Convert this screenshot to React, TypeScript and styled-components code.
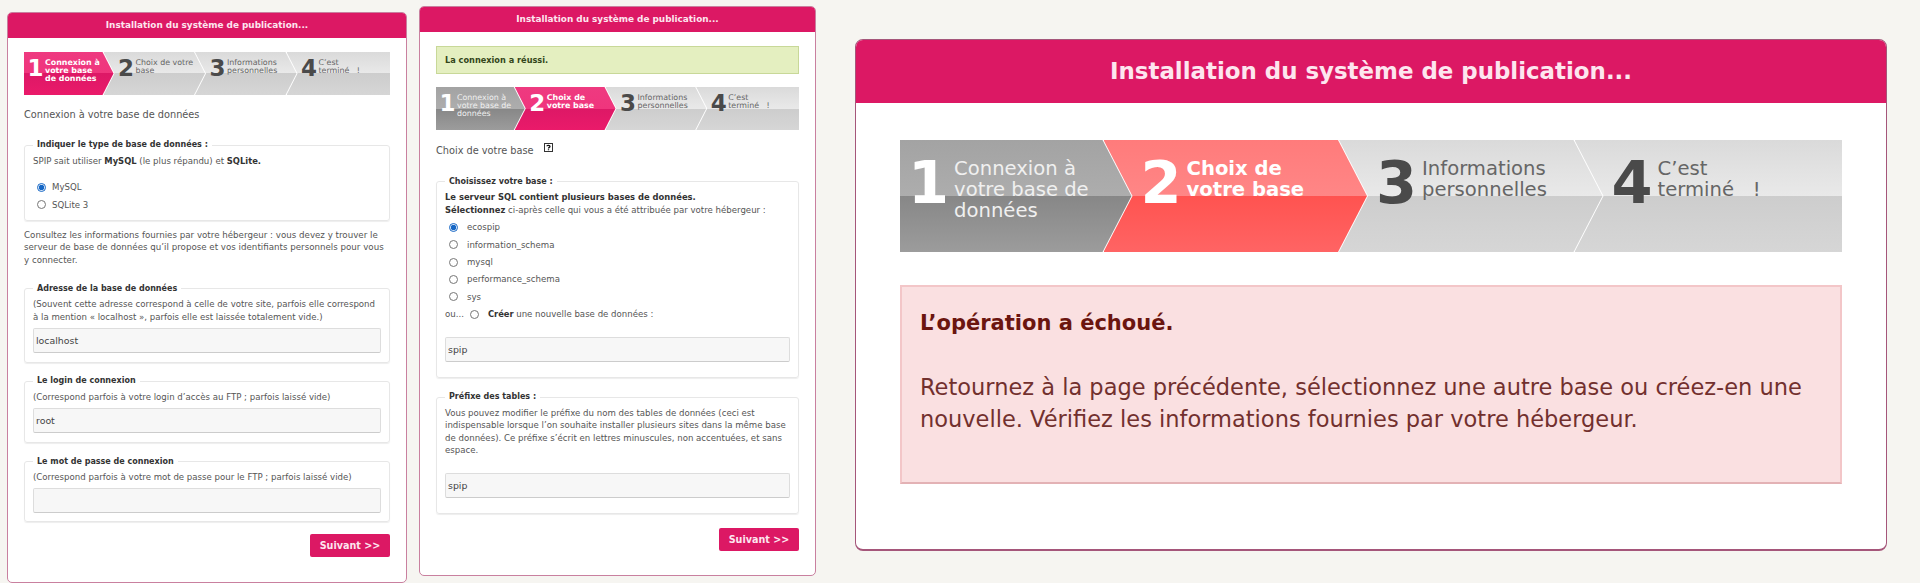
import React from "react";
import styled, { createGlobalStyle, css } from "styled-components";

const Global = createGlobalStyle`
  html, body { margin: 0; padding: 0; background: #f6f5f1; }
  body { font-family: "DejaVu Sans", Verdana, sans-serif; color: #555; height: 583px; overflow: hidden; }
`;

const Page = styled.div`
  display: flex;
  align-items: flex-start;
  padding-left: 7px;
`;

const Panel = styled.section<{ $w: number; $top: number; $h: number; $gap: number; $large?: boolean }>`
  box-sizing: border-box;
  width: ${(p) => p.$w}px;
  height: ${(p) => p.$h}px;
  margin-top: ${(p) => p.$top}px;
  margin-right: ${(p) => p.$gap}px;
  flex: none;
  background: #fff;
  border: 1px solid #c9809f;
  border-radius: 5px;
  overflow: hidden;
  ${(p) =>
    p.$large &&
    css`
      border: 1px solid #a5567a;
      border-bottom-width: 2px;
      border-radius: 8px;
    `}
`;

const Header = styled.h1<{ $large?: boolean }>`
  margin: 0;
  background: #dc1864;
  color: #fde6ef;
  font-weight: bold;
  text-align: center;
  font-size: ${(p) => (p.$large ? "22.9px" : "8.9px")};
  height: ${(p) => (p.$large ? "63px" : "25px")};
  line-height: ${(p) => (p.$large ? "63px" : "24px")};
`;

const Body = styled.div<{ $large?: boolean }>`
  padding: ${(p) => (p.$large ? "37px 44px 0" : "14px 16px 0")};
`;

const Trail = styled.ol<{ $large?: boolean; $coral?: boolean }>`
  display: flex;
  list-style: none;
  margin: 0;
  padding: 0;
  --h: 43px; --c: 11px; --pad: 3.5px; --shift: 1px; --num: 23px; --label: 7.9px; --lh: 8.2px; --num-top: 5px; --label-top: 7px; --gap: 1.5px;
  --on-t1: #ee3a80; --on-t2: #f0357d; --on-b1: #dd1866; --on-b2: #ea1a6a;
  ${(p) =>
    p.$large &&
    css`
      --h: 112px; --c: 29px; --pad: 8px; --shift: 3px; --num: 59px; --label: 19.6px; --lh: 21px; --num-top: 13px; --label-top: 18px; --gap: 5px;
    `}
  ${(p) =>
    p.$coral &&
    css`
      --on-t1: #ff7b7b; --on-t2: #ff8686; --on-b1: #ff5350; --on-b2: #ff6464;
    `}
`;

const stateColors = {
  done: css`
    --t1: #a3a3a3; --t2: #adadad; --b1: #878787; --b2: #9c9c9c;
    --num-color: #fff; --label-color: #f0f0f0;
  `,
  active: css`
    --t1: var(--on-t1); --t2: var(--on-t2); --b1: var(--on-b1); --b2: var(--on-b2);
    --num-color: #fff; --label-color: #fff; --label-weight: bold;
  `,
  todo: css`
    --t1: #dadada; --t2: #e9e9e9; --b1: #cdcdcd; --b2: #d6d6d6;
    --num-color: #4a4a4a; --label-color: #666;
  `,
};

const chevron = "polygon(0 0, calc(100% - var(--c)) 0, 100% 50%, calc(100% - var(--c)) 100%, 0 100%)";

const Step = styled.li<{ $state: keyof typeof stateColors; $z: number }>`
  ${(p) => stateColors[p.$state]}
  box-sizing: border-box;
  position: relative;
  z-index: ${(p) => p.$z};
  display: flex;
  align-items: flex-start;
  flex: none;
  width: calc(25% + var(--c));
  height: var(--h);
  margin-left: calc(var(--c) * -1);
  padding-left: calc(var(--c) + var(--pad));
  background: #fff;
  clip-path: ${chevron};
  &::before {
    content: "";
    position: absolute;
    inset: 0 1px 0 0;
    clip-path: ${chevron};
    background: linear-gradient(var(--t1), var(--t2) 50%, var(--b1) 50%, var(--b2));
  }
  &:first-child {
    width: calc(25% - var(--shift));
    margin-left: 0;
    padding-left: var(--pad);
  }
  &:last-child {
    flex: 1;
    width: auto;
    clip-path: none;
    &::before { clip-path: none; right: 0; }
  }
`;

const StepNumber = styled.span`
  position: relative;
  flex: none;
  margin-top: var(--num-top);
  margin-right: var(--gap);
  font-size: var(--num);
  line-height: 1;
  font-weight: bold;
  color: var(--num-color);
`;

const StepLabel = styled.span`
  position: relative;
  margin-top: var(--label-top);
  font-size: var(--label);
  line-height: var(--lh);
  white-space: pre-line;
  color: var(--label-color);
  font-weight: var(--label-weight, normal);
`;

const PageTitle = styled.h2<{ $top: number; $bottom: number }>`
  margin: ${(p) => p.$top}px 0 ${(p) => p.$bottom}px;
  font-size: 9.75px;
  line-height: 12px;
  font-weight: normal;
  color: #555;
  display: flex;
  align-items: center;
`;

const HelpBadge = styled.svg`
  margin-left: 10px;
  margin-top: -8px;
`;

const Group = styled.fieldset<{ $h: number; $after?: number }>`
  box-sizing: border-box;
  height: ${(p) => p.$h}px;
  margin: 0 0 ${(p) => p.$after ?? 12.5}px;
  min-width: 0;
  padding: 0 8px;
  border: 1px solid #e7e7e7;
  border-radius: 3px;
  box-shadow: 0 1px 1px #eee;
  font-size: 8.6px;
  line-height: 12.5px;
  color: #555;
`;

const Caption = styled.legend`
  margin-left: 0;
  padding: 0 4px;
  font-size: 8px;
  line-height: 12px;
  font-weight: bold;
  color: #333;
`;

const Text = styled.p<{ $bottom?: number }>`
  margin: 3.5px 0 ${(p) => p.$bottom ?? 0}px;
  strong { color: #333; font-size: 8.4px; }
`;

const Paragraph = styled.p`
  margin: 0 0 16.5px;
  font-size: 8.7px;
  line-height: 12.6px;
  color: #555;
`;

const RadioRow = styled.label`
  display: flex;
  align-items: center;
  height: 17.3px;
  font-size: 8.6px;
  color: #555;
  strong { color: #333; margin-right: 2.5px; font-size: 8.4px; }
`;

const Radio = styled.input.attrs({ type: "radio" })<{ $gap?: number }>`
  width: 9px;
  height: 9px;
  margin: 0 ${(p) => p.$gap ?? 9}px 0 4px;
  accent-color: #1667c5;
`;

const Lead = styled.span`
  margin-right: 2px;
`;

const Field = styled.input<{ $top?: number }>`
  display: block;
  box-sizing: border-box;
  width: 100%;
  height: 25px;
  margin-top: ${(p) => p.$top ?? 5}px;
  padding: 0 2px;
  background: #f7f7f7;
  border: 1px solid #ddd;
  border-bottom-color: #ccc;
  border-radius: 2px;
  outline: none;
  font: 9.4px "DejaVu Sans", sans-serif;
  color: #444;
`;

const Actions = styled.div`
  display: flex;
  justify-content: flex-end;
`;

const Next = styled.button`
  width: 80px;
  height: 23px;
  padding: 0;
  border: 0;
  border-radius: 2px;
  background: #dc1864;
  color: #fde6ef;
  font: bold 9.6px "DejaVu Sans", sans-serif;
`;

const Success = styled.div`
  box-sizing: border-box;
  height: 28px;
  margin-bottom: 13px;
  padding-left: 8px;
  background: #e4efc0;
  border: 1px solid #c8d898;
  font-size: 8.2px;
  font-weight: bold;
  line-height: 26px;
  color: #33461a;
`;

const Failure = styled.div`
  box-sizing: border-box;
  height: 199px;
  margin-top: 33px;
  padding: 19px 18px;
  background: #fae0e1;
  border: 2px solid #f3c6c8;
  border-bottom-color: #e3b2b5;
  font-size: 22.5px;
  line-height: 32px;
  color: #72302e;
  strong { color: #6b150f; font-size: 21px; }
`;

type StepDef = { label: string; state: keyof typeof stateColors };

const Steps: React.FC<{ steps: StepDef[]; large?: boolean; coral?: boolean }> = ({ steps, large, coral }) => (
  <Trail $large={large} $coral={coral}>
    {steps.map((s, i) => (
      <Step key={i} $state={s.state} $z={steps.length - i}>
        <StepNumber>{i + 1}</StepNumber>
        <StepLabel>{s.label}</StepLabel>
      </Step>
    ))}
  </Trail>
);

const TITLE = "Installation du système de publication...";

const firstSteps: StepDef[] = [
  { label: "Connexion à\nvotre base\nde données", state: "active" },
  { label: "Choix de votre\nbase", state: "todo" },
  { label: "Informations\npersonnelles", state: "todo" },
  { label: "C’est\nterminé\u00a0\u00a0\u00a0!", state: "todo" },
];
const secondSteps: StepDef[] = [
  { label: "Connexion à\nvotre base de\ndonnées", state: "done" },
  { label: "Choix de\nvotre base", state: "active" },
  { label: "Informations\npersonnelles", state: "todo" },
  { label: "C’est\nterminé\u00a0\u00a0\u00a0!", state: "todo" },
];

const bases = ["ecospip", "information_schema", "mysql", "performance_schema", "sys"];

export default function App() {
  return (
    <Page>
      <Global />
      <Panel $w={400} $h={571} $top={12} $gap={12}>
        <Header>{TITLE}</Header>
        <Body>
          <Steps steps={firstSteps} />
          <PageTitle $top={14} $bottom={18}>Connexion à votre base de données</PageTitle>
          <Group $h={82} $after={7.7}>
            <Caption>Indiquer le type de base de données :</Caption>
            <Text $bottom={12}>
              SPIP sait utiliser <strong>MySQL</strong> (le plus répandu) et <strong>SQLite.</strong>
            </Text>
            <RadioRow><Radio name="t" $gap={6} defaultChecked />MySQL</RadioRow>
            <RadioRow><Radio name="t" $gap={6} />SQLite 3</RadioRow>
          </Group>
          <Paragraph>
            Consultez les informations fournies par votre hébergeur : vous devez y trouver le serveur de base de données
            qu’il propose et vos identifiants personnels pour vous y connecter.
          </Paragraph>
          <Group $h={80}>
            <Caption>Adresse de la base de données</Caption>
            <Text>
              (Souvent cette adresse correspond à celle de votre site, parfois elle correspond à la mention « localhost », parfois elle est laissée totalement vide.)
            </Text>
            <Field defaultValue="localhost" />
          </Group>
          <Group $h={68}>
            <Caption>Le login de connexion</Caption>
            <Text>(Correspond parfois à votre login d’accès au FTP ; parfois laissé vide)</Text>
            <Field defaultValue="root" />
          </Group>
          <Group $h={66} $after={12.5}>
            <Caption>Le mot de passe de connexion</Caption>
            <Text>(Correspond parfois à votre mot de passe pour le FTP ; parfois laissé vide)</Text>
            <Field $top={4} />
          </Group>
          <Actions><Next>Suivant &gt;&gt;</Next></Actions>
        </Body>
      </Panel>

      <Panel $w={397} $h={570} $top={6} $gap={39}>
        <Header>{TITLE}</Header>
        <Body>
          <Success>La connexion a réussi.</Success>
          <Steps steps={secondSteps} />
          <PageTitle $top={15} $bottom={18.5}>
            Choix de votre base
            <HelpBadge width="9" height="9" viewBox="0 0 9 9">
              <rect x="0.5" y="0.5" width="8" height="8" fill="#fff" stroke="#333" />
              <path d="M3 3.2C3 2 6 2 6 3.4C6 4.4 4.5 4.3 4.5 5.4M4.5 6.2V7.2" fill="none" stroke="#111" strokeWidth="1.3" />
            </HelpBadge>
          </PageTitle>
          <Group $h={202.5} $after={13}>
            <Caption>Choisissez votre base :</Caption>
            <Text $bottom={3}>
              <strong>Le serveur SQL contient plusieurs bases de données.</strong>
              <br />
              <strong>Sélectionnez</strong> ci-après celle qui vous a été attribuée par votre hébergeur :
            </Text>
            {bases.map((b, i) => (
              <RadioRow key={b}><Radio name="b" defaultChecked={i === 0} />{b}</RadioRow>
            ))}
            <RadioRow><Lead>ou...</Lead><Radio name="b" /><strong>Créer</strong> une nouvelle base de données :</RadioRow>
            <Field defaultValue="spip" $top={14} />
          </Group>
          <Group $h={123} $after={14}>
            <Caption>Préfixe des tables :</Caption>
            <Text>
              Vous pouvez modifier le préfixe du nom des tables de données (ceci est indispensable lorsque l’on souhaite installer plusieurs sites dans la même base de données). Ce préfixe s’écrit en lettres minuscules, non accentuées, et sans espace.
            </Text>
            <Field defaultValue="spip" $top={16.5} />
          </Group>
          <Actions><Next>Suivant &gt;&gt;</Next></Actions>
        </Body>
      </Panel>

      <Panel $w={1032} $h={512} $top={39} $gap={0} $large>
        <Header $large>{TITLE}</Header>
        <Body $large>
          <Steps steps={secondSteps} large coral />
          <Failure>
            <strong>L’opération a échoué.</strong>
            <br />
            <br />
            Retournez à la page précédente, sélectionnez une autre base ou créez-en une nouvelle. Vérifiez les informations fournies par votre hébergeur.
          </Failure>
        </Body>
      </Panel>
    </Page>
  );
}
